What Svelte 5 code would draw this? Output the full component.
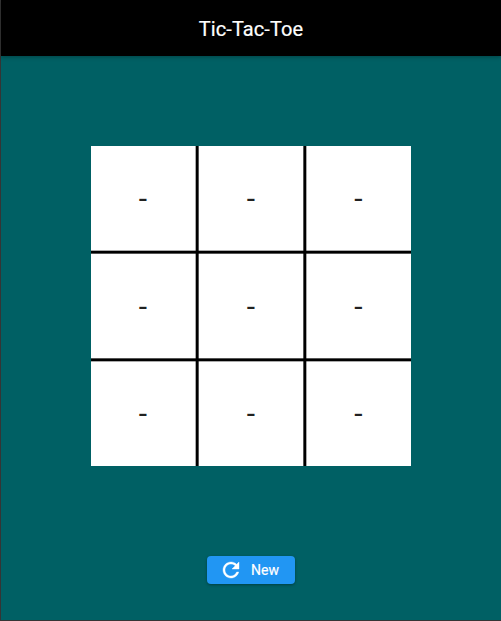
<script>
  let cells = $state(Array(9).fill('-'));
  let turn = $state('X');

  function play(i) {
    if (cells[i] !== '-') return;
    cells[i] = turn;
    turn = turn === 'X' ? 'O' : 'X';
  }

  function reset() {
    cells = Array(9).fill('-');
    turn = 'X';
  }
</script>

<div class="window">
  <div class="app">
    <header><h1>Tic-Tac-Toe</h1></header>
    <main>
      <div class="board">
        {#each cells as cell, i}
          <button class="cell" onclick={() => play(i)}>{cell}</button>
        {/each}
      </div>
      <button class="new" onclick={reset}>
        <svg viewBox="0 0 24 24" width="24" height="24" aria-hidden="true">
          <path fill="#fff" stroke="#fff" stroke-width="0.4" d="M17.65 6.35C16.2 4.9 14.21 4 12 4c-4.42 0-7.99 3.58-7.99 8s3.57 8 7.99 8c3.73 0 6.84-2.55 7.73-6h-2.08c-.82 2.33-3.04 4-5.65 4-3.31 0-6-2.69-6-6s2.69-6 6-6c1.66 0 3.14.69 4.22 1.78L13 11h7V4l-2.35 2.35z" />
        </svg>
        <span>New</span>
      </button>
    </main>
  </div>
</div>

<style>
  :global(body) {
    margin: 0;
  }
  .window {
    box-sizing: border-box;
    width: 501px;
    height: 621px;
    padding: 0 0 1px 1px;
    background: #353535;
    font-family: Roboto, sans-serif;
    overflow: hidden;
  }
  .app {
    height: 620px;
    display: flex;
    flex-direction: column;
    background: #006064;
  }
  header {
    box-sizing: border-box;
    height: 56px;
    padding-top: 2px;
    flex: none;
    display: flex;
    align-items: center;
    justify-content: center;
    background: #000;
    box-shadow: 0 1px 4px rgba(0, 0, 0, 0.3);
  }
  h1 {
    margin: 0;
    font-size: 20px;
    line-height: 24px;
    font-weight: 400;
    letter-spacing: 0.1px;
    color: #fff;
    -webkit-text-stroke: 0.2px #fff;
  }
  main {
    flex: 1;
    display: flex;
    flex-direction: column;
    align-items: center;
    padding-top: 90px;
  }
  .board {
    --line: #fff 104px, #aaa 104px 105px, #000 105px 107px, #555 107px 108px, #fff 108px 212px, #555 212px 213px, #000 213px 215px, #aaa 215px 216px, #fff 216px;
    display: grid;
    grid-template-columns: repeat(3, 104px);
    grid-template-rows: repeat(3, 104px);
    gap: 4px;
    background: linear-gradient(to right, var(--line)), linear-gradient(to bottom, var(--line));
    background-blend-mode: multiply;
  }
  button {
    border: 0;
    margin: 0;
    font-family: inherit;
    cursor: pointer;
  }
  .cell {
    padding: 2px 0 0;
    background: transparent;
    color: #212121;
    font-size: 30px;
    line-height: 36px;
  }
  .cell:nth-child(3n) {
    padding-right: 1px;
  }
  .cell:nth-child(n + 7) {
    padding-top: 0;
  }
  .new {
    display: flex;
    align-items: center;
    gap: 8px;
    width: 88px;
    height: 28px;
    margin-top: 90px;
    padding: 0 12px;
    border-radius: 4px;
    background: #2196f3;
    color: #fff;
    font-size: 14px;
    font-weight: 400;
    letter-spacing: 0.1px;
    -webkit-text-stroke: 0.2px #fff;
    box-shadow: 0 1px 3px rgba(0, 0, 0, 0.35);
  }
</style>
